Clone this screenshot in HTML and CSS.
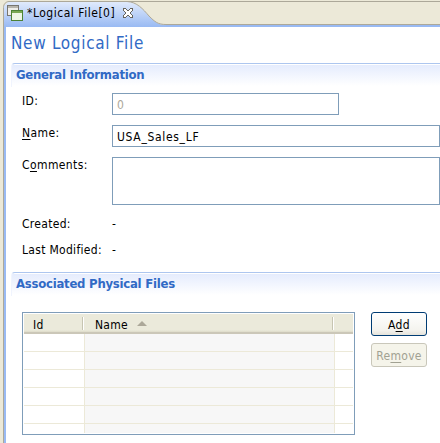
FILE: index.html
```html
<!DOCTYPE html>
<html lang="en">
<head>
<meta charset="utf-8">
<title>Logical File</title>
<link rel="stylesheet" href="styles.css">
</head>
<body>
<main class="editor">
  <header class="tabs">
    <svg class="tab-shape" width="437" height="26" viewBox="3 1 437 26">
      <defs><linearGradient id="tab" x1="0" y1="0" x2="0" y2="1"><stop offset="0" stop-color="#e0eafc"/><stop offset="1" stop-color="#99baf3"/></linearGradient></defs>
      <path d="M3 27V7L8 2H127C137 2 143 9 149 16C155 22 158 25 166 25H440V27Z" fill="url(#tab)"/>
      <path d="M166 25H440V27H166Z" fill="#99baf3"/>
      <path d="M3.5 27V7.5C3.5 4 6 1.5 9 1.5H440M127 1.5C137 2 143 9 149 16C155 22 158 24.5 166 24.5H440" fill="none" stroke="#aca899"/>
    </svg>
    <div class="tab">
      <svg width="17" height="17" viewBox="0 0 17 17" shape-rendering="crispEdges">
        <path d="M.5 1.500H11.500V11.500H.5Z" fill="#eeede9" stroke="#77756f"/><path d="M1 2H11V4H1Z" fill="#b6b4ad"/>
        <path d="M4.500 6.500H15.500V16.500H4.500Z" fill="#edf6e4" stroke="#4c8235"/><path d="M5 7H15V9H5Z" fill="#79a953"/>
      </svg>
      <span class="tab-name">*Logical File[0]</span>
      <svg class="close" width="10" height="10" viewBox="0 0 10 10" shape-rendering="crispEdges"><path d="M.5 .5H2.500L5 3L7.500 .5H9.500V2.500L7 5L9.500 7.500V9.500H7.500L5 7L2.500 9.500H.5V7.500L3 5L.5 2.500Z" fill="#fff" stroke="#66645e"/></svg>
    </div>
  </header>
  <div class="page">
    <h1>New Logical File</h1>
    <section>
      <h2 class="t-general">General Information</h2>
      <div class="form">
        <label class="l-id">ID:</label><div class="field short">0</div>
        <label class="l-name"><u>N</u>ame:</label><div class="field">USA_Sales_LF</div>
        <label class="l-comments">C<u>o</u>mments:</label><div class="field area"></div>
      </div>
      <div class="info"><span class="l-created">Created:</span><span>-</span></div>
      <div class="info"><span class="l-modified">Last Modified:</span><span>-</span></div>
    </section>
    <section class="files">
      <h2 class="t-files">Associated Physical Files</h2>
      <div class="content">
        <div class="table">
          <div class="thead"><span class="c-id">Id</span><span class="c-name">Name<i class="sort"></i></span><span></span></div>
          <div class="row"><span></span><span></span><span></span></div>
          <div class="row"><span></span><span></span><span></span></div>
          <div class="row"><span></span><span></span><span></span></div>
          <div class="row"><span></span><span></span><span></span></div>
          <div class="row"><span></span><span></span><span></span></div>
          <div class="row last"><span></span><span></span><span></span></div>
        </div>
        <div class="buttons">
          <button class="add"><span>A<u>d</u>d</span></button>
          <button class="remove" disabled><span>Re<u>m</u>ove</span></button>
        </div>
      </div>
    </section>
  </div>
</main>
</body>
</html>
```
FILE: styles.css
```css
* { box-sizing: border-box; }
body { margin: 0; width: 440px; height: 443px; overflow: hidden; background: #ece9d8; font: 12px/16px "DejaVu Sans Condensed", "DejaVu Sans", sans-serif; font-stretch: condensed; color: #000; white-space: nowrap; }
.editor { height: 443px; padding: 1px 0 0 3px; }
.tabs { position: relative; height: 26px; }
.tab-shape { position: absolute; left: 0; top: 0; }
.tab { position: relative; display: flex; padding: 3px 0 0 4px; }
.tab-name { margin-left: 3px; width: 88px; margin-top: 1px; letter-spacing: .52px; }
.close { margin: 4px 0 0 8px; }
.page { height: 416px; border-left: 1px solid #aca899; box-shadow: inset 2px 0 #99baf3; background: #fff; padding: 6px 0 0 7px; }
h1 { margin: 0; height: 30px; font-size: 17px; line-height: 21px; font-weight: normal; letter-spacing: .68px; color: #316ac5; }
h2 { margin: 0; height: 24px; padding: 3px 0 0 5px; border-top: 1px solid #adc6ef; border-left: 1px solid #e5ecfd; border-radius: 4px 0 0 0; font-size: 13px; line-height: 16px; letter-spacing: -.25px; color: #316ac5; background: linear-gradient(#fff 1px, #e5ecfd 1px, #fff 22px); }
h2 { padding-left: 4px; border-left-color: #f0f4fe; }
.form { display: grid; grid-template-columns: 90px 1fr; grid-template-rows: 22px 22px 48px; row-gap: 10px; padding: 6px 0 0 11px; }
label { letter-spacing: .4px; }
.field { border: 1px solid #7f9db9; padding: 3px 4px; letter-spacing: .68px; }
.short { width: 227px; color: #aca899; }
.info { display: flex; height: 26px; padding-left: 11px; letter-spacing: .3px; }
.info span:first-child { width: 90px; }
.form + .info { margin-top: 11px; }
.files { margin-top: 4px; }
.content { display: flex; gap: 16px; padding: 16px 0 0 11px; }
.table { width: 333px; height: 123px; border: 1px solid #7f9db9; padding: 1px; }
.thead, .row { display: grid; grid-template-columns: 60px 251px 1fr; height: 18px; border-bottom: 1px solid #ece9d8; }
.thead { height: 20px; border-bottom: 2px solid #cbc7b8; background: linear-gradient(#ebeadb 16px, #dedbc9 18px); }
.thead span { position: relative; padding: 3px 0 0 9px; letter-spacing: .3px; }
.thead .c-name { padding-left: 11px; }
.c-id::after, .c-name::after { content: ""; position: absolute; right: 0; top: 3px; width: 2px; height: 13px; background: linear-gradient(90deg, #c7c5b2 50%, #fff 50%); }
.c-name::after { right: 1px; }
.row span:nth-child(2) { background: #f7f7f7; border: solid #ece9d8; border-width: 0 1px; }
.last { height: 9px; border: 0; }
.sort { display: inline-block; border: solid transparent; border-width: 0 5px 5px; border-bottom-color: #aca899; margin: 0 0 3px 9px; }
.buttons { display: flex; flex-direction: column; gap: 7px; }
button { width: 56px; height: 24px; padding: 1px 0 0; border: 1px solid #003c74; border-radius: 3px; background: linear-gradient(#fff, #f5f4ef 75%, #e5e3db); font: inherit; letter-spacing: .3px; color: #000; }
.remove { border-color: #c9c7ba; background: #f5f4ea; color: #a1a192; }
u { text-underline-offset: 2px; text-decoration-thickness: 1px; text-decoration-skip-ink: none; }
```
